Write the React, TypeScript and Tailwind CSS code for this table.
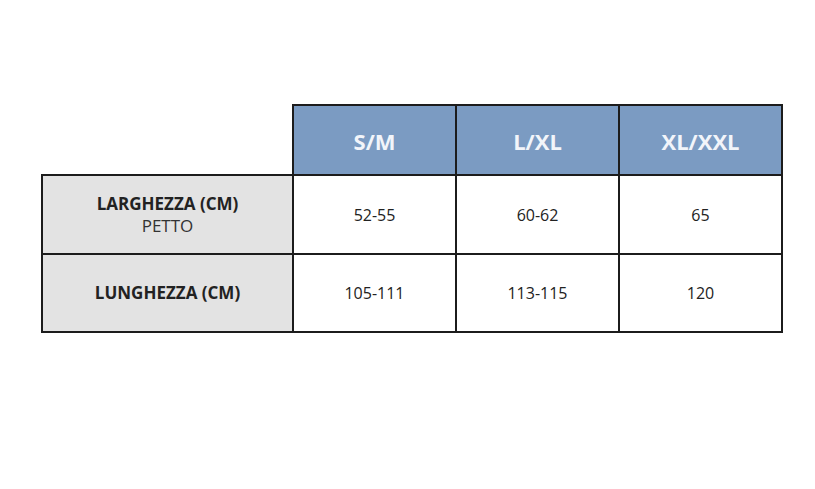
export default function App() {
  const font = { fontFamily: '"Open Sans", "Noto Sans", sans-serif' };
  return (
    <div className="w-[815px] h-[489px] bg-white pt-[104px] pl-[41px]" style={font}>
      <table className="border-collapse table-fixed text-[#222]">
        <colgroup>
          <col className="w-[251px]" />
          <col className="w-[163px]" />
          <col className="w-[163px]" />
          <col className="w-[163px]" />
        </colgroup>
        <tbody>
          <tr className="h-[70px]">
            <td className="p-0"></td>
            {['S/M', 'L/XL', 'XL/XXL'].map((s) => (
              <td key={s} className="p-0 pt-[2px] border-2 border-[#1c1c1c] bg-[#7b9bc2] text-center text-[22px] font-bold text-[#f2f5fa]">
                {s}
              </td>
            ))}
          </tr>
          <tr className="h-[79px]">
            <td className="p-0 border-2 border-[#1c1c1c] bg-[#e3e3e3] text-center leading-[22px]">
              <div className="text-[17px] font-bold">LARGHEZZA (CM)</div>
              <div className="text-[17px] text-[#333]">PETTO</div>
            </td>
            {['52-55', '60-62', '65'].map((s, i) => (
              <td key={i} className="p-0 border-2 border-[#1c1c1c] text-center text-[16px]">{s}</td>
            ))}
          </tr>
          <tr className="h-[78px]">
            <td className="p-0 border-2 border-[#1c1c1c] bg-[#e3e3e3] text-center text-[17px] font-bold">LUNGHEZZA (CM)</td>
            {['105-111', '113-115', '120'].map((s, i) => (
              <td key={i} className="p-0 border-2 border-[#1c1c1c] text-center text-[16px]">{s}</td>
            ))}
          </tr>
        </tbody>
      </table>
    </div>
  );
}
